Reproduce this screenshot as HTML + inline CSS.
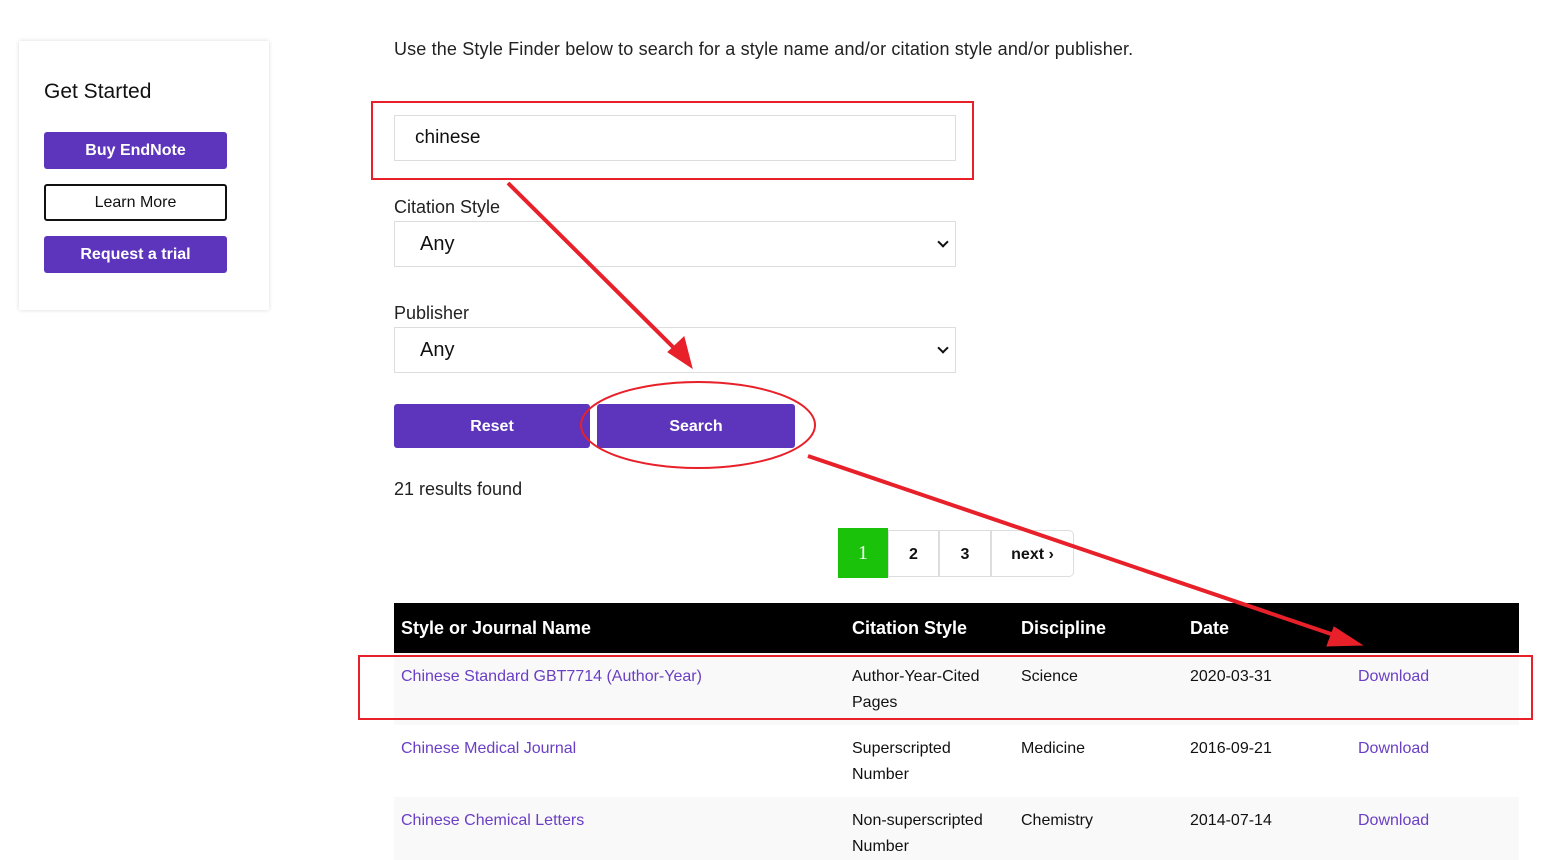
<!DOCTYPE html>
<html><head><meta charset="utf-8"><style>
body{margin:0;width:1555px;height:860px;overflow:hidden;background:#fff;font-family:"Liberation Sans",sans-serif;color:#222;position:relative}
.a{position:absolute}
.btn{position:absolute;border-radius:3px;background:#5c35bc;color:#fff;font-weight:bold;font-size:16px;text-align:center;box-sizing:border-box}
.card{left:19px;top:41px;width:250px;height:269px;box-shadow:0 0 4px rgba(0,0,0,.15);background:#fff}
.sel{position:absolute;left:394px;width:562px;height:46px;border:1px solid #ddd;box-sizing:border-box;font-size:20px;padding:11px 0 0 25px;color:#111}
.sel:after{content:"";position:absolute;right:8px;top:16px;width:6px;height:6px;border-right:2px solid #111;border-bottom:2px solid #111;transform:rotate(45deg)}
.pg{position:absolute;top:530px;height:47px;border:1px solid #ddd;box-sizing:border-box;font-size:16px;font-weight:bold;text-align:center;line-height:47px;color:#111}
.th{position:absolute;top:618px;color:#fff;font-weight:bold;font-size:18px}
.td{position:absolute;font-size:16px;line-height:26px;color:#111}
.lk{color:#6a3fc4}
</style></head><body>
<div class="a card"></div>
<div class="a" style="left:44px;top:80px;font-size:21px;color:#111">Get Started</div>
<div class="btn" style="left:44px;top:132px;width:183px;height:37px;line-height:37px">Buy EndNote</div>
<div class="btn" style="left:44px;top:184px;width:183px;height:37px;line-height:33px;background:#fff;color:#111;border:2px solid #111;font-weight:normal">Learn More</div>
<div class="btn" style="left:44px;top:236px;width:183px;height:37px;line-height:37px">Request a trial</div>

<div class="a" style="left:394px;top:39px;font-size:18px;color:#222;letter-spacing:0.15px">Use the Style Finder below to search for a style name and/or citation style and/or publisher.</div>
<div class="a" style="left:394px;top:115px;width:562px;height:46px;border:1px solid #ddd;box-sizing:border-box;font-size:19px;padding:11px 0 0 20px;color:#111">chinese</div>
<div class="a" style="left:394px;top:197px;font-size:18px">Citation Style</div>
<div class="sel" style="top:221px">Any</div>
<div class="a" style="left:394px;top:303px;font-size:18px">Publisher</div>
<div class="sel" style="top:327px">Any</div>
<div class="btn" style="left:394px;top:404px;width:196px;height:44px;line-height:45px">Reset</div>
<div class="btn" style="left:597px;top:404px;width:198px;height:44px;line-height:45px">Search</div>
<div class="a" style="left:394px;top:479px;font-size:18px">21 results found</div>

<div class="pg" style="left:838px;top:528px;height:50px;width:50px;background:#1ac30a;border:none;color:#fff;font-family:'Liberation Serif',serif;font-weight:normal;font-size:20px;line-height:50px">1</div>
<div class="pg" style="left:888px;width:51px">2</div>
<div class="pg" style="left:939px;width:52px">3</div>
<div class="pg" style="left:991px;width:83px;border-radius:0 5px 5px 0">next ›</div>

<div class="a" style="left:394px;top:603px;width:1125px;height:50px;background:#000"></div>
<div class="th" style="left:401px">Style or Journal Name</div>
<div class="th" style="left:852px">Citation Style</div>
<div class="th" style="left:1021px">Discipline</div>
<div class="th" style="left:1190px">Date</div>
<div class="a" style="left:394px;top:653px;width:1125px;height:72px;background:#f9f9f9"></div>
<div class="a" style="left:394px;top:797px;width:1125px;height:63px;background:#f9f9f9"></div>

<div class="td lk" style="left:401px;top:664px">Chinese Standard GBT7714 (Author-Year)</div>
<div class="td" style="left:852px;top:664px">Author-Year-Cited<br>Pages</div>
<div class="td" style="left:1021px;top:664px">Science</div>
<div class="td" style="left:1190px;top:664px">2020-03-31</div>
<div class="td lk" style="left:1358px;top:664px">Download</div>

<div class="td lk" style="left:401px;top:736px">Chinese Medical Journal</div>
<div class="td" style="left:852px;top:736px">Superscripted<br>Number</div>
<div class="td" style="left:1021px;top:736px">Medicine</div>
<div class="td" style="left:1190px;top:736px">2016-09-21</div>
<div class="td lk" style="left:1358px;top:736px">Download</div>

<div class="td lk" style="left:401px;top:808px">Chinese Chemical Letters</div>
<div class="td" style="left:852px;top:808px">Non-superscripted<br>Number</div>
<div class="td" style="left:1021px;top:808px">Chemistry</div>
<div class="td" style="left:1190px;top:808px">2014-07-14</div>
<div class="td lk" style="left:1358px;top:808px">Download</div>

<svg class="a" style="left:0;top:0" width="1555" height="860">
<g fill="none" stroke="#e8202a" stroke-width="2">
<rect x="372" y="102" width="601" height="77"/>
<rect x="359" y="656" width="1173" height="63"/>
<ellipse cx="698" cy="425" rx="117" ry="43"/>
</g>
<g stroke="#e8202a" stroke-width="4" fill="#e8202a">
<line x1="508" y1="183" x2="678" y2="352"/>
<polygon points="692,368 668,352 684,337" stroke-width="1"/>
<line x1="808" y1="456" x2="1340" y2="637"/>
<polygon points="1362,645 1334,627 1327,646" stroke-width="1"/>
</g>
</svg>
</body></html>
